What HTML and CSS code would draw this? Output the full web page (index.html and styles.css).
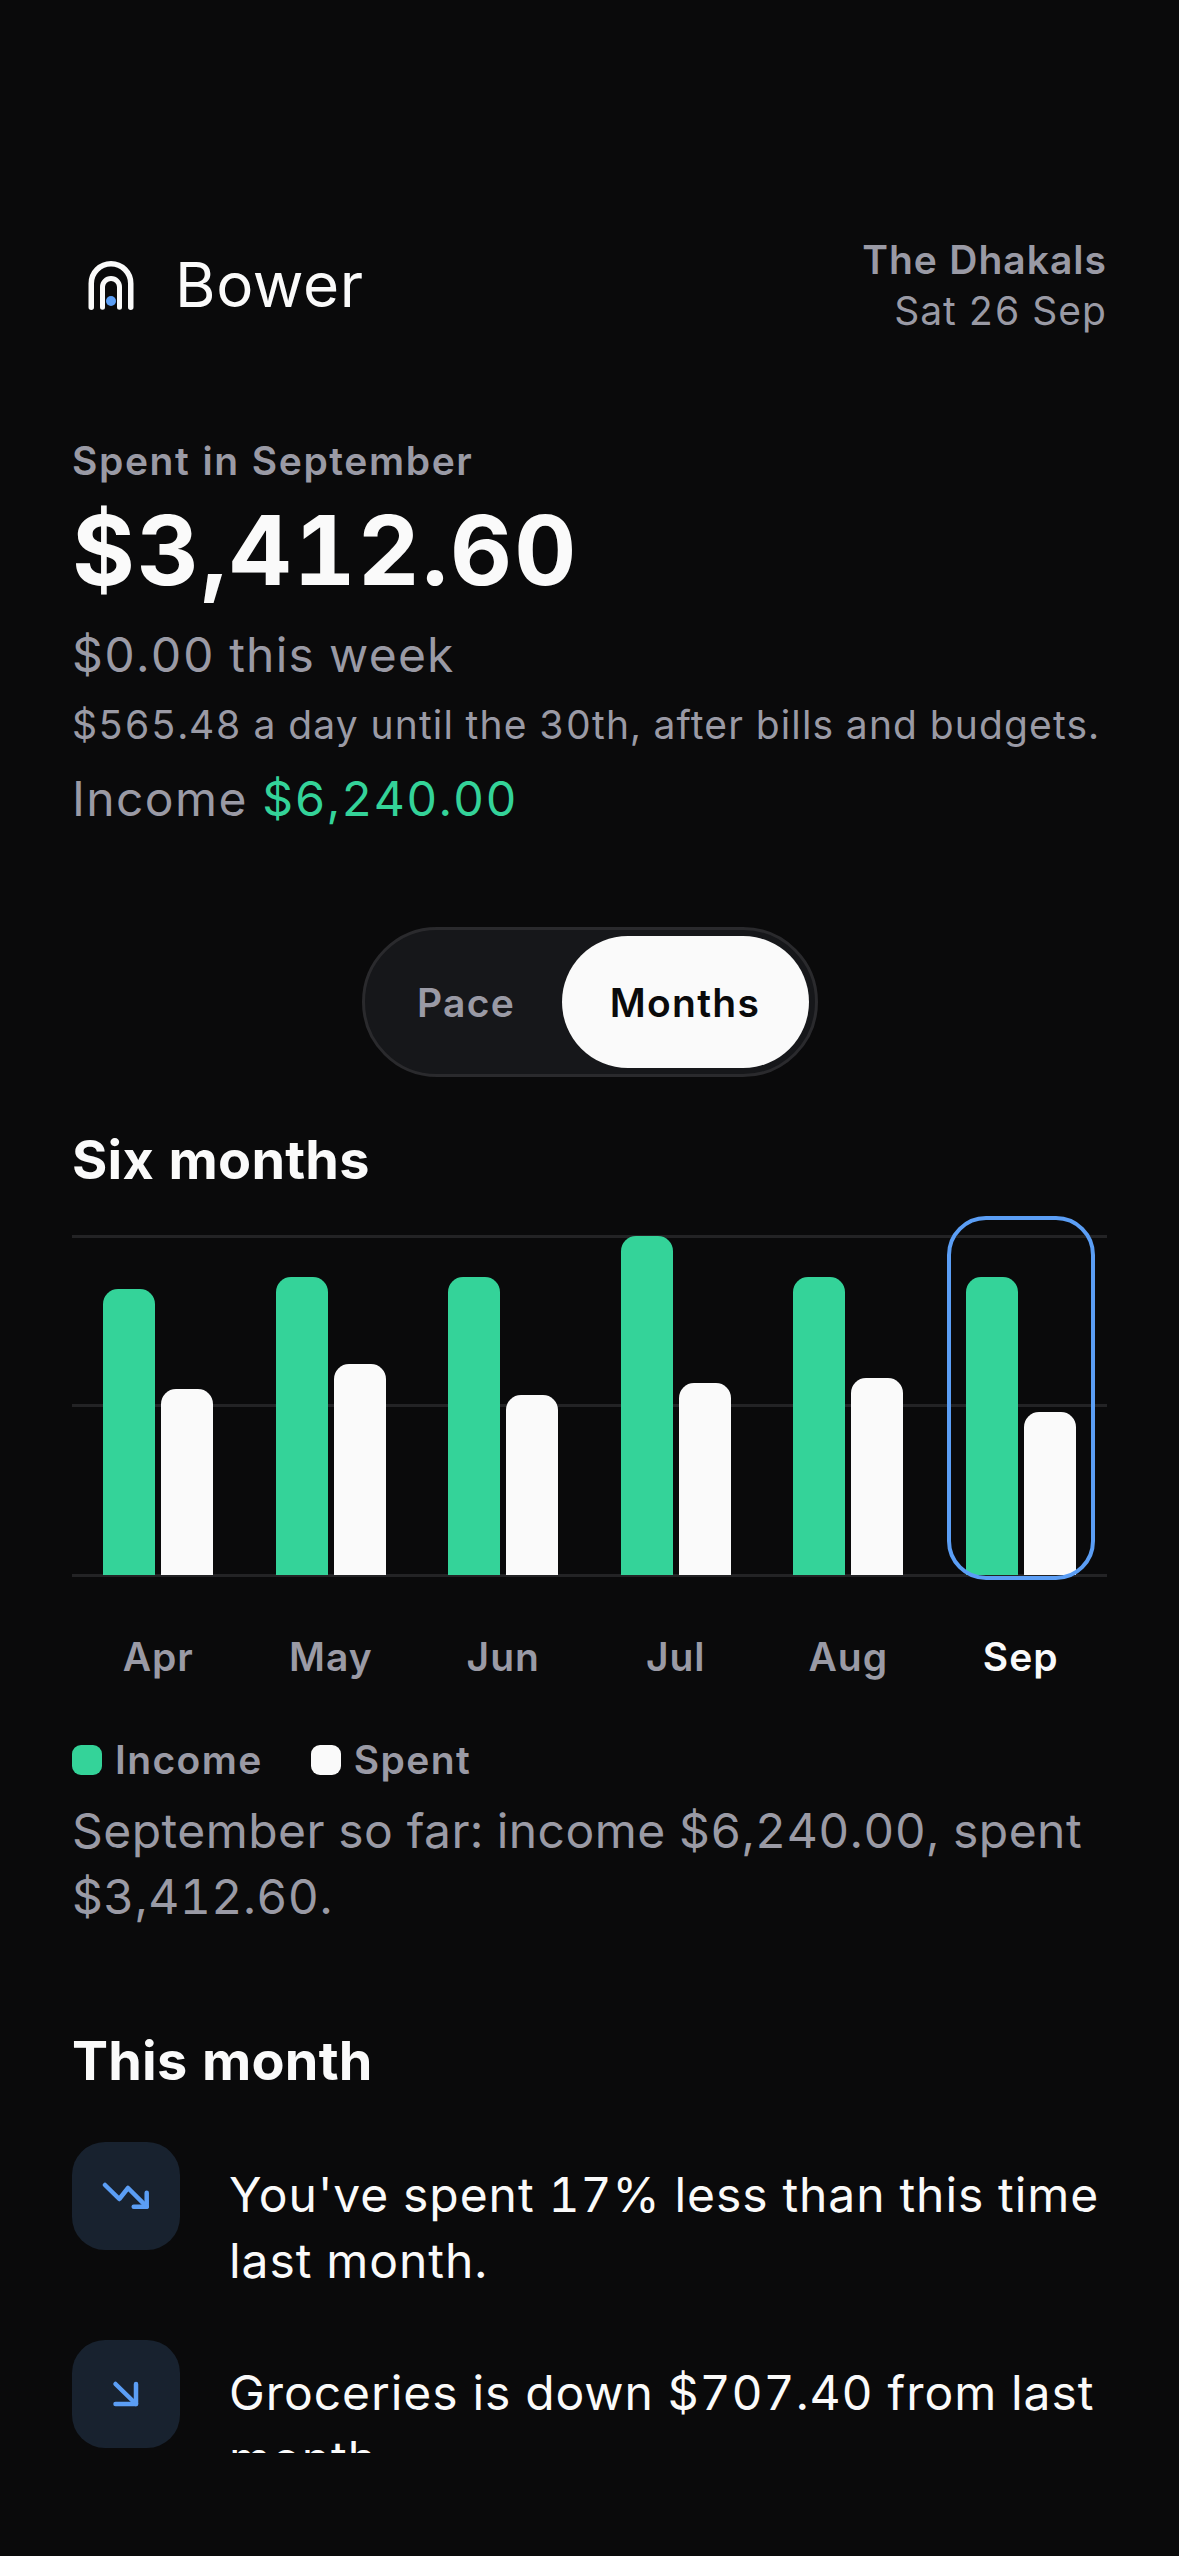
FILE: index.html
```html
<!DOCTYPE html>
<html lang="en">
<head>
  <meta charset="UTF-8">
  <meta name="viewport" content="width=device-width, initial-scale=1.0">
  <title>Bower</title>
  <link rel="stylesheet" href="styles.css">
</head>
<body>

<div class="screen">

  <!-- Header -->
  <div class="header">
    <div class="brand">
      <svg class="brand-logo" width="48" height="50" viewBox="0 0 48 50" fill="none">
        <path d="M4.25 47.25V23.5a19.75 19.75 0 0 1 39.5 0v23.75" stroke="#fafafa" stroke-width="5.5" stroke-linecap="round"/>
        <path d="M15.5 47.25V27a8.5 8.5 0 0 1 17 0v20.25" stroke="#fafafa" stroke-width="5" stroke-linecap="round"/>
        <circle cx="24" cy="41" r="5" fill="#5b9ef5"/>
      </svg>
      <span class="brand-name">Bower</span>
    </div>
    <div class="household">
      <div class="household-name">The Dhakals</div>
      <div class="household-date">Sat 26 Sep</div>
    </div>
  </div>

  <!-- Summary -->
  <div class="summary">
    <div class="summary-label">Spent in September</div>
    <div class="summary-amount">$3,412.60</div>
    <div class="summary-line">$0.00 this week</div>
    <div class="summary-note">$565.48 a day until the 30th, after bills and budgets.</div>
    <div class="summary-line summary-income">Income <span class="green">$6,240.00</span></div>
  </div>

  <!-- Toggle -->
  <div class="toggle-wrap">
    <div class="toggle">
      <div class="toggle-item">Pace</div>
      <div class="toggle-item toggle-active">Months</div>
    </div>
  </div>

  <!-- Six months -->
  <h2 class="section-title">Six months</h2>
  <div class="chart">
    <div class="grid-line grid-top"></div>
    <div class="grid-line grid-mid"></div>
    <div class="grid-line grid-bottom"></div>
    <div class="month">
      <div class="bar bar-income" style="height: 286px"></div>
      <div class="bar bar-spent" style="height: 186px"></div>
    </div>
    <div class="month">
      <div class="bar bar-income" style="height: 298px"></div>
      <div class="bar bar-spent" style="height: 211px"></div>
    </div>
    <div class="month">
      <div class="bar bar-income" style="height: 298px"></div>
      <div class="bar bar-spent" style="height: 180px"></div>
    </div>
    <div class="month">
      <div class="bar bar-income" style="height: 339px"></div>
      <div class="bar bar-spent" style="height: 192px"></div>
    </div>
    <div class="month">
      <div class="bar bar-income" style="height: 298px"></div>
      <div class="bar bar-spent" style="height: 197px"></div>
    </div>
    <div class="month month-current">
      <div class="bar bar-income" style="height: 298px"></div>
      <div class="bar bar-spent" style="height: 163px"></div>
    </div>
  </div>
  <div class="month-labels">
    <div>Apr</div>
    <div>May</div>
    <div>Jun</div>
    <div>Jul</div>
    <div>Aug</div>
    <div class="label-current">Sep</div>
  </div>

  <div class="legend">
    <div class="legend-item"><span class="swatch swatch-income"></span>Income</div>
    <div class="legend-item"><span class="swatch swatch-spent"></span>Spent</div>
  </div>
  <p class="chart-caption">September so far: income $6,240.00, spent $3,412.60.</p>

  <!-- This month -->
  <h2 class="section-title month-title">This month</h2>
  <div class="insight">
    <div class="insight-icon">
      <svg width="48" height="32" viewBox="0 0 48 32" fill="none" stroke="#5b9ef5" stroke-width="4.5" stroke-linecap="round" stroke-linejoin="round">
        <path d="M3 5l14.3 14L26 8l18.7 18.7"/>
        <path d="M31.7 26.7h13V12.7"/>
      </svg>
    </div>
    <div class="insight-text">You've spent 17% less than this time last month.</div>
  </div>
  <div class="insight">
    <div class="insight-icon">
      <svg width="28" height="28" viewBox="0 0 28 28" fill="none" stroke="#5b9ef5" stroke-width="4.5" stroke-linecap="round" stroke-linejoin="round">
        <path d="M3.5 4L24 24"/>
        <path d="M3.5 24H24V4"/>
      </svg>
    </div>
    <div class="insight-text">Groceries is down $707.40 from last month.</div>
  </div>

</div>

</body>
</html>
```

FILE: styles.css
```css
* {
  box-sizing: border-box;
}
body {
  margin: 0;
  background-color: #0a0a0b;
  color: #fafafa;
  font-family: Inter, "Noto Sans", sans-serif;
  font-variant-numeric: tabular-nums;
}
.screen {
  height: 2453px;
  overflow: hidden;
  padding: 234px 72px 0;
}

/* Header */
.header {
  display: flex;
  justify-content: space-between;
  align-items: center;
}
.brand {
  display: flex;
  align-items: center;
}
.brand-logo {
  margin-left: 15px;
  margin-right: 40px;
}
.brand-name {
  font-size: 62px;
  line-height: 72px;
  letter-spacing: 0.6px;
}
.household {
  text-align: right;
  font-size: 39px;
  line-height: 51px;
  letter-spacing: 1px;
  color: #9a9aa5;
}
.household-name {
  font-weight: 600;
}

/* Summary */
.summary {
  margin-top: 99px;
}
.summary-label {
  font-size: 39px;
  line-height: 51px;
  letter-spacing: 1.6px;
  font-weight: 600;
  color: #9a9aa5;
}
.summary-amount {
  font-size: 96px;
  line-height: 120px;
  letter-spacing: 2.2px;
  font-weight: 700;
  margin-top: 4px;
}
.summary-line {
  font-size: 48px;
  line-height: 66px;
  letter-spacing: 1.2px;
  color: #9a9aa5;
  margin-top: 12px;
}
.summary-note {
  font-size: 39px;
  line-height: 51px;
  letter-spacing: 1.15px;
  color: #9a9aa5;
  margin-top: 11px;
}
.summary-income {
  margin-top: 16px;
  letter-spacing: 1.4px;
}
.green {
  color: #34d399;
}

/* Toggle */
.toggle-wrap {
  display: flex;
  justify-content: center;
  margin-top: 95px;
}
.toggle {
  display: flex;
  padding: 6px;
  background-color: #16171a;
  border: 3px solid #2a2a2d;
  border-radius: 75px;
}
.toggle-item {
  display: flex;
  align-items: center;
  justify-content: center;
  height: 132px;
  width: 191px;
  font-size: 39px;
  letter-spacing: 1.3px;
  font-weight: 600;
  color: #9a9aa5;
  border-radius: 66px;
}
.toggle-active {
  width: 247px;
  background-color: #fafafa;
  color: #0a0a0b;
}

/* Chart */
.section-title {
  margin: 0;
  font-size: 54px;
  line-height: 66px;
  letter-spacing: 0.2px;
  font-weight: 700;
}
.toggle-wrap + .section-title {
  margin-top: 50px;
}
.chart {
  position: relative;
  display: flex;
  align-items: flex-end;
  height: 339px;
  margin-top: 43px;
}
.grid-line {
  position: absolute;
  left: 0;
  right: 0;
  height: 3px;
  background-color: #232325;
}
.grid-top {
  top: -1px;
}
.grid-mid {
  top: 168px;
}
.grid-bottom {
  bottom: -2px;
}
.month {
  position: relative;
  flex: 1;
  display: flex;
  justify-content: center;
  align-items: flex-end;
  gap: 6px;
  height: 100%;
}
.month-current::after {
  content: "";
  position: absolute;
  left: 12px;
  right: 12px;
  top: -20px;
  bottom: -5px;
  border: 4.5px solid #5b9ef5;
  border-radius: 39px;
}
.bar {
  position: relative;
  width: 52px;
  border-radius: 15px 15px 0 0;
}
.bar-income {
  background-color: #34d399;
}
.bar-spent {
  background-color: #fafafa;
}
.month-labels {
  display: flex;
  margin-top: 59px;
  font-size: 39px;
  line-height: 45px;
  letter-spacing: 1px;
  font-weight: 600;
  color: #9a9aa5;
}
.month-labels div {
  flex: 1;
  text-align: center;
}
.month-labels .label-current {
  color: #fafafa;
}

/* Legend */
.legend {
  display: flex;
  gap: 48px;
  margin-top: 57px;
  font-size: 39px;
  line-height: 48px;
  letter-spacing: 1.4px;
  font-weight: 600;
  color: #9a9aa5;
}
.legend-item {
  display: flex;
  align-items: center;
  gap: 13px;
}
.swatch {
  width: 30px;
  height: 30px;
  border-radius: 9px;
}
.swatch-income {
  background-color: #34d399;
}
.swatch-spent {
  background-color: #fafafa;
}
.chart-caption {
  margin: 14px 0 0;
  font-size: 48px;
  line-height: 66px;
  letter-spacing: 0.45px;
  color: #9a9aa5;
}

/* This month */
.month-title {
  margin-top: 98px;
}
.insight {
  display: flex;
  gap: 49px;
  margin-top: 46px;
}
.month-title + .insight {
  margin-top: 48px;
}
.insight-icon {
  flex: none;
  display: flex;
  align-items: center;
  justify-content: center;
  width: 108px;
  height: 108px;
  background-color: #18222f;
  border-radius: 33px;
}
.insight-text {
  font-size: 48px;
  line-height: 66px;
  letter-spacing: 0.95px;
  padding-top: 20px;
}
```
